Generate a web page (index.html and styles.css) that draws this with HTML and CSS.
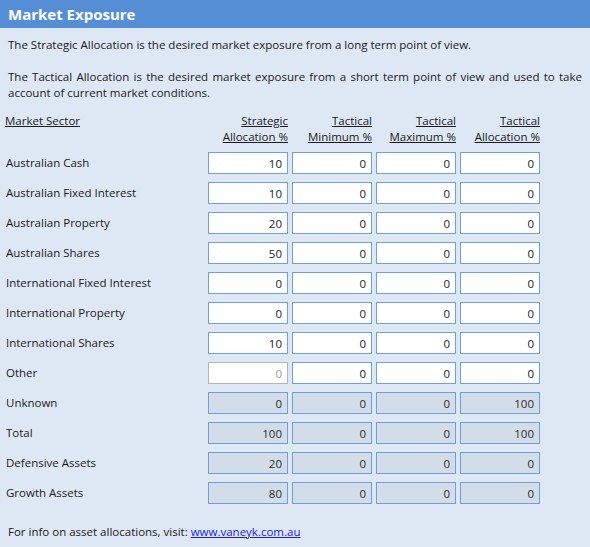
FILE: index.html
```html
<!DOCTYPE html>
<html>
<head>
<meta charset="utf-8">
<link rel="stylesheet" href="styles.css">
</head>
<body>
<div class="header">Market Exposure</div>
<div class="intro">
  <p class="p1">The Strategic Allocation is the desired market exposure from a long term point of view.</p>
  <p class="p2">The Tactical Allocation is the desired market exposure from a short term point of view and used to take account of current market conditions.</p>
</div>
<div class="grid">
  <div class="colhead left"><span>Market Sector</span></div>
  <div class="colhead"><span>Strategic</span><br><span>Allocation %</span></div>
  <div class="colhead"><span>Tactical</span><br><span>Minimum %</span></div>
  <div class="colhead"><span>Tactical</span><br><span>Maximum %</span></div>
  <div class="colhead"><span>Tactical</span><br><span>Allocation %</span></div>

  <div class="label">Australian Cash</div>
  <input class="cell" value="10"><input class="cell" value="0"><input class="cell" value="0"><input class="cell" value="0">

  <div class="label">Australian Fixed Interest</div>
  <input class="cell" value="10"><input class="cell" value="0"><input class="cell" value="0"><input class="cell" value="0">

  <div class="label">Australian Property</div>
  <input class="cell" value="20"><input class="cell" value="0"><input class="cell" value="0"><input class="cell" value="0">

  <div class="label">Australian Shares</div>
  <input class="cell" value="50"><input class="cell" value="0"><input class="cell" value="0"><input class="cell" value="0">

  <div class="label">International Fixed Interest</div>
  <input class="cell" value="0"><input class="cell" value="0"><input class="cell" value="0"><input class="cell" value="0">

  <div class="label">International Property</div>
  <input class="cell" value="0"><input class="cell" value="0"><input class="cell" value="0"><input class="cell" value="0">

  <div class="label">International Shares</div>
  <input class="cell" value="10"><input class="cell" value="0"><input class="cell" value="0"><input class="cell" value="0">

  <div class="label">Other</div>
  <input class="cell muted" value="0" readonly><input class="cell" value="0"><input class="cell" value="0"><input class="cell" value="0">

  <div class="label">Unknown</div>
  <input class="cell calc" value="0" readonly><input class="cell calc" value="0" readonly><input class="cell calc" value="0" readonly><input class="cell calc" value="100" readonly>

  <div class="label">Total</div>
  <input class="cell calc" value="100" readonly><input class="cell calc" value="0" readonly><input class="cell calc" value="0" readonly><input class="cell calc" value="100" readonly>

  <div class="label">Defensive Assets</div>
  <input class="cell calc" value="20" readonly><input class="cell calc" value="0" readonly><input class="cell calc" value="0" readonly><input class="cell calc" value="0" readonly>

  <div class="label">Growth Assets</div>
  <input class="cell calc" value="80" readonly><input class="cell calc" value="0" readonly><input class="cell calc" value="0" readonly><input class="cell calc" value="0" readonly>
</div>
<div class="footer">For info on asset allocations, visit: <a href="#">www.vaneyk.com.au</a></div>
</body>
</html>
```

FILE: styles.css
```css
html, body {
  margin: 0;
  padding: 0;
}
body {
  background: #dee8f4;
  font-family: "Open Sans", "DejaVu Sans", sans-serif;
  font-size: 11.5px;
  line-height: 16px;
  color: #1a1a1a;
  width: 590px;
  height: 547px;
  overflow: hidden;
}
.header {
  height: 28px;
  line-height: 28px;
  background: #558ed5;
  color: #fff;
  font-weight: bold;
  font-size: 15px;
  padding-left: 8px;
}
.intro {
  padding: 0 8px;
}
.intro p {
  margin: 0;
}
.p1 {
  margin-top: 9px !important;
}
.p2 {
  margin-top: 16px !important;
  text-align: justify;
}
.grid {
  display: grid;
  grid-template-columns: 199px 80px 80px 80px 80px;
  grid-template-rows: 31px;
  grid-auto-rows: 22px;
  column-gap: 4px;
  row-gap: 8px;
  padding-left: 5px;
  margin-top: 12px;
}
.colhead {
  text-align: right;
}
.colhead span {
  text-decoration: underline;
}
.colhead.left {
  text-align: left;
}
.label {
  padding-left: 1px;
  line-height: 22px;
}
.cell {
  box-sizing: border-box;
  width: 80px;
  height: 22px;
  margin: 0;
  border: 1px solid #6f9fe0;
  background: #fff;
  font-family: inherit;
  font-size: 11.5px;
  color: #1a1a1a;
  text-align: right;
  padding: 0 5px 0 2px;
  outline: none;
}
.cell.muted {
  border-color: #b5b5b5;
  color: #9a9a9a;
}
.cell.calc {
  background: #d3dde8;
  color: #2a2a2a;
}
.footer {
  padding-left: 8px;
  margin-top: 20px;
}
.footer a {
  color: #1a1aee;
  text-decoration: underline;
}
```
